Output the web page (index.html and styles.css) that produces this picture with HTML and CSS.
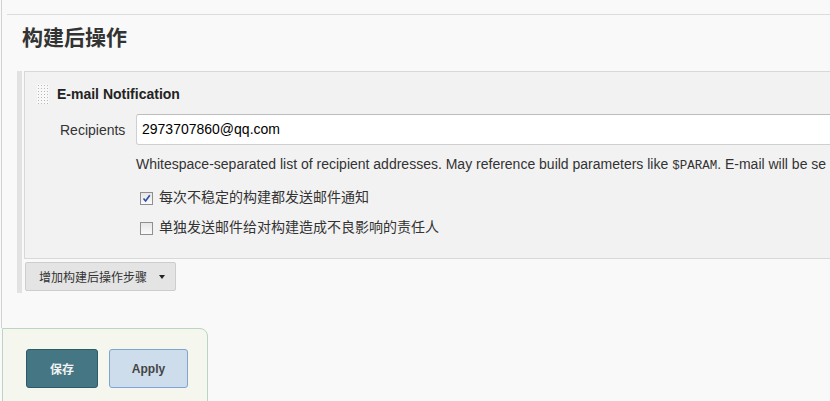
FILE: index.html
```html
<!DOCTYPE html>
<html>
<head>
<meta charset="utf-8">
<link rel="stylesheet" href="styles.css">
</head>
<body>
<div class="frame">
  <div class="rule"></div>
  <h2 class="title">构建后操作</h2>
  <div class="section">
    <div class="panel">
      <div class="panel-head">
        <span class="handle"></span>
        <span class="panel-title">E-mail Notification</span>
      </div>
      <div class="field">
        <label class="field-label">Recipients</label>
        <div class="field-input">2973707860@qq.com</div>
      </div>
      <div class="help">Whitespace-separated list of recipient addresses. May reference build parameters like <code>$PARAM</code>. E-mail will be se</div>
      <div class="check-row first">
        <span class="cb checked"><svg width="9" height="9" viewBox="0 0 9 9"><path d="M1.5 4.5 L3.6 7 L7.8 1.2" fill="none" stroke="#2b4fa0" stroke-width="1.6"/></svg></span>
        <span class="check-label">每次不稳定的构建都发送邮件通知</span>
      </div>
      <div class="check-row">
        <span class="cb"></span>
        <span class="check-label">单独发送邮件给对构建造成不良影响的责任人</span>
      </div>
    </div>
    <button class="add-btn">增加构建后操作步骤<span class="caret"></span></button>
  </div>
</div>
<div class="bottom">
  <button class="btn-save">保存</button>
  <button class="btn-apply">Apply</button>
</div>
</body>
</html>
```
FILE: styles.css
```css
html, body {
  margin: 0;
  padding: 0;
  overflow: hidden;
}
body {
  background: #f9f9f9;
  font-family: "Liberation Sans", Arial, "Noto Sans CJK SC", sans-serif;
  color: #333;
  width: 830px;
  height: 401px;
}
.frame {
  margin-left: 1px;
  border-left: 1px solid #d2d2d2;
  height: 328px;
  width: 960px;
  padding-top: 14px;
  box-sizing: border-box;
}
.rule {
  margin-left: 5px;
  border-top: 1px solid #dcdcdc;
}
.title {
  margin: 6px 0 20px 0;
  padding-left: 20px;
  font-family: "Noto Sans CJK SC", sans-serif;
  font-size: 21px;
  line-height: 30px;
  font-weight: bold;
  color: #333;
}
.section {
  margin-left: 15px;
  border-left: 5px solid #e2e2e2;
  padding-left: 2px;
  padding-bottom: 2px;
}
.panel {
  border: 1px solid #d8d8d8;
  background: #f2f2f2;
  padding: 12px 0 0 0;
  height: 174px;
  box-sizing: content-box;
}
.panel-head {
  display: flex;
  align-items: center;
  height: 20px;
  padding-left: 12px;
}
.handle {
  width: 12px;
  height: 20px;
  background-image: radial-gradient(circle, #b9b9b9 0.8px, transparent 1px);
  background-size: 3px 3px;
  background-color: #f8f8f8;
}
.panel-title {
  margin-left: 8px;
  font-weight: bold;
  font-size: 14px;
  color: #222;
}
.field {
  display: flex;
  align-items: center;
  margin-top: 10px;
  height: 31px;
}
.field-label {
  width: 76px;
  padding-left: 35px;
  font-size: 14px;
  color: #333;
}
.field-input {
  flex: 1;
  height: 31px;
  box-sizing: border-box;
  border: 1px solid #cfcfcf;
  border-top-color: #bdbdbd;
  border-radius: 3px 0 0 3px;
  background: #fff;
  padding-left: 5px;
  font-size: 14px;
  line-height: 29px;
  color: #000;
}
.help {
  margin: 11px 0 0 111px;
  font-size: 14px;
  line-height: 16px;
  color: #333;
  white-space: nowrap;
}
.help code {
  font-family: "Liberation Mono", monospace;
  font-size: 12.5px;
}
.check-row {
  display: flex;
  align-items: center;
  margin-left: 115px;
  height: 30px;
}
.check-row.first {
  margin-top: 7px;
}
.cb {
  width: 13px;
  height: 13px;
  box-sizing: border-box;
  border: 1px solid #8f8f8f;
  background: linear-gradient(#e6e6e6, #fafafa);
  display: flex;
  align-items: center;
  justify-content: center;
  margin-top: 5px;
}
.check-label {
  margin-left: 6px;
  font-family: "Noto Sans CJK SC", sans-serif;
  font-size: 14px;
  color: #333;
}
.add-btn {
  margin: 3px 0 0 1px;
  width: 151px;
  height: 29px;
  box-sizing: border-box;
  border: 1px solid #cdcdcd;
  border-radius: 2px;
  background: #e4e4e4;
  font-family: "Noto Sans CJK SC", sans-serif;
  font-size: 12px;
  color: #333;
  padding: 0 0 0 13px;
  display: flex;
  align-items: center;
  text-align: left;
}
.caret {
  width: 0;
  height: 0;
  border-left: 3.5px solid transparent;
  border-right: 3.5px solid transparent;
  border-top: 4px solid #222;
  margin-left: 12px;
}
.bottom {
  margin-left: 2px;
  width: 206px;
  height: 90px;
  box-sizing: border-box;
  border: 1px solid #b8d6c2;
  border-top-right-radius: 8px;
  background: #f5f7ef;
  padding: 20px 0 0 23px;
  display: flex;
  align-items: flex-start;
}
.btn-save {
  width: 72px;
  height: 39px;
  border: 1px solid #2e5966;
  border-radius: 3px;
  background: #447684;
  color: #f2f2f2;
  font-family: "Noto Sans CJK SC", sans-serif;
  font-size: 12px;
  font-weight: bold;
  padding: 0;
}
.btn-apply {
  margin-left: 11px;
  width: 79px;
  height: 39px;
  border: 1px solid #7ea4d0;
  border-radius: 3px;
  background: #cdddec;
  color: #444;
  font-family: "Liberation Sans", Arial, sans-serif;
  font-size: 12px;
  font-weight: bold;
  padding: 0;
}
```
